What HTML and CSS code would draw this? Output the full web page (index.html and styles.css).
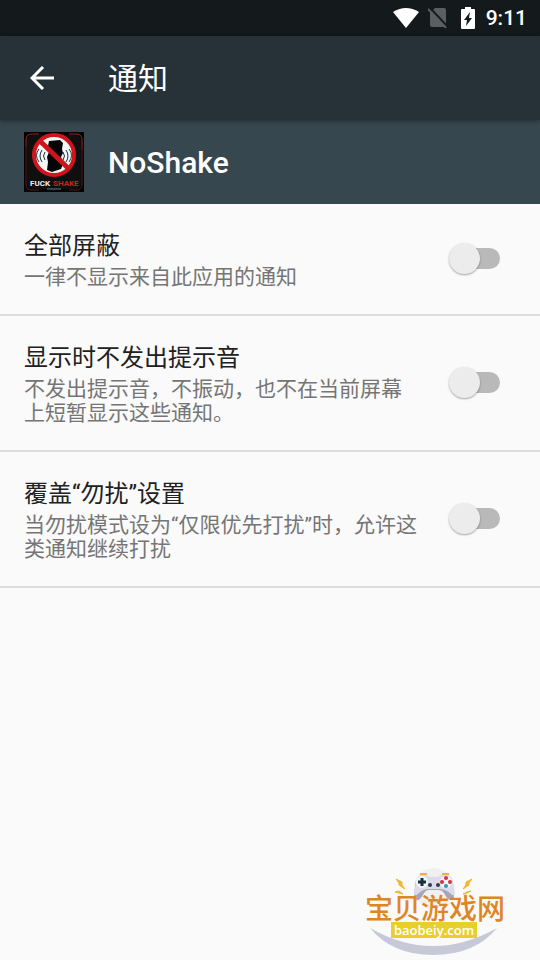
FILE: index.html
```html
<!DOCTYPE html>
<html lang="zh-CN">
<head>
<meta charset="UTF-8">
<meta name="viewport" content="width=device-width, initial-scale=1.0">
<title>通知</title>
<link rel="stylesheet" href="styles.css">
</head>
<body>

<div class="status-bar">
  <svg class="wifi-icon" viewBox="0 0 26 20" width="26" height="20">
    <path d="M0 4Q13-4 26 4L13 20Z" fill="#fff"/>
  </svg>
  <svg class="sim-icon" viewBox="0 0 20 20" width="20" height="20">
    <path d="M7 0h9q2 0 2 2v17H4q-2 0-2-2V5z" fill="#5b5f61"/>
    <path d="M2 0l18 19" stroke="#14191c" stroke-width="2"/>
    <path d="M0 1l18 19" stroke="#5b5f61" stroke-width="2"/>
  </svg>
  <svg class="battery-icon" viewBox="0 0 14 22" width="14" height="22">
    <path d="M4 0h6v2h3q1 0 1 1v18q0 1-1 1H1q-1 0-1-1V3q0-1 1-1h3z" fill="#fff"/>
    <path d="M9 5L3 13h3l-1 6 6-8H8z" fill="#14191c"/>
  </svg>
  <span class="clock">9:11</span>
</div>

<header class="toolbar">
  <button class="back" type="button" aria-label="返回">
    <svg viewBox="0 0 24 24" width="24" height="24">
      <path d="M13 1L2 12l11 11M2 12h22" fill="none" stroke="#fff" stroke-width="3"/>
    </svg>
  </button>
  <h1>通知</h1>
</header>

<section class="app-header">
  <svg class="app-icon" viewBox="0 0 60 60" width="60" height="60">
    <rect width="60" height="60" fill="#030303"/>
    <rect x="3" y="3" width="54" height="54" rx="6" fill="#0f0f0f"/>
    <path d="M2 15V8q0-6 6-6h7M45 2h7q6 0 6 6v10" fill="none" stroke="#a02422"/>
    <path d="M2 15v37q0 6 6 6h7M45 58h7q6 0 6-6V18" fill="none" stroke="#58191a"/>
    <circle cx="30" cy="23" r="19" fill="#f4f7f7"/>
    <!-- phone -->
    <path d="M25 9l11-1 3 3-1 6 1 4-2 4 2 7-2 5-9 3-5-2 1-8-1-5 2-5-1-6z" fill="#050505"/>
    <!-- vibration waves -->
    <path d="M21 20q-3 4 0 8M18 18q-4 6 0 12M15 17q-5 6 0 13M39 20q3 4 0 8M42 18q4 6 0 12M45 17q5 6 0 13" fill="none" stroke="#1d3438"/>
    <circle cx="30" cy="23" r="20" fill="none" stroke="#d0141b" stroke-width="4"/>
    <path d="M16 9l29 28" stroke="#d0141b" stroke-width="5"/>
    <text class="icon-text" x="6" y="54" fill="#eee">FUCK</text>
    <text class="icon-text" x="29" y="54" fill="#c92020">SHAKE</text>
    <path d="M23 57h14" stroke="#438d91"/>
  </svg>
  <h2>NoShake</h2>
</section>

<main>
  <div class="setting">
    <label class="setting-text" for="blockAll">
      <span class="title">全部屏蔽</span>
      <span class="summary">一律不显示来自此应用的通知</span>
    </label>
    <input class="switch" type="checkbox" role="switch" id="blockAll">
  </div>
  <div class="setting">
    <label class="setting-text" for="silent">
      <span class="title">显示时不发出提示音</span>
      <span class="summary">不发出提示音，不振动，也不在当前屏幕上短暂显示这些通知。</span>
    </label>
    <input class="switch" type="checkbox" role="switch" id="silent">
  </div>
  <div class="setting">
    <label class="setting-text" for="override">
      <span class="title">覆盖“勿扰”设置</span>
      <span class="summary">当勿扰模式设为“仅限优先打扰”时，允许这类通知继续打扰</span>
    </label>
    <input class="switch" type="checkbox" role="switch" id="override">
  </div>
</main>

<!-- Site badge over the bottom corner -->
<div class="badge">
  <svg class="badge-art" viewBox="0 0 140 92" width="140" height="92">
    <circle cx="69" cy="22" r="20" fill="#f0f0f1"/>
    <path d="M5 62Q68 98 132 62Q110 89 68 89Q27 89 5 62Z" fill="#c7c9d6"/>
    <!-- controller -->
    <path d="M51 14l-2 15q0 6 4 5 3-1 6-7 2-3 5-3h10q3 0 5 3 3 6 6 7 4 1 4-5l-2-15z" fill="#a5a7b8"/>
    <path d="M55 9h7q2 2 4 2h6q2 0 4-2h7q4 1 5 7l2 12q-2 3-5-1-5-4-11-4H64q-6 0-10 4-4 4-5 1l2-12q1-6 4-7z" fill="#dcdce8"/>
    <path d="M55 8h7M77 8h7" stroke="#e9b23b" stroke-width="2"/>
    <circle cx="57" cy="16" r="6" fill="#f3f3f8"/>
    <circle cx="81" cy="16" r="6" fill="#f3f3f8"/>
    <path d="M53 16h8M57 12v8" stroke="#17313d" stroke-width="3"/>
    <circle cx="81" cy="12" r="2" fill="#d8323c"/>
    <circle cx="77" cy="16" r="2" fill="#d8323c"/>
    <circle cx="85" cy="16" r="2" fill="#d8323c"/>
    <circle cx="81" cy="20" r="2" fill="#2b9caf"/>
    <circle cx="65" cy="19" r="2" fill="#26404e"/>
    <circle cx="73" cy="19" r="2" fill="#26404e"/>
    <!-- sparks -->
    <path d="M31 13l6 3v3l3 4-6-4v-2zM107 13l-6 3v3l-3 4 6-4v-2zM30 26l4-1 4 3-4-1zM106 25l-4 1-4 2 4-1z" fill="#f1b632" stroke="#f1b632"/>
  </svg>
  <div class="badge-name">宝贝游戏网</div>
  <div class="badge-url">baobeiy.com</div>
</div>

</body>
</html>
```
FILE: styles.css
```css
/* General Styling */
* {
  box-sizing: border-box;
}

body {
  margin: 0;
  min-height: 100vh;
  position: relative;
  background-color: #fafafa;
  color: #212121;
  font-family: Roboto, "Noto Sans CJK SC", sans-serif;
}

h1, h2 {
  margin: 0;
  color: #fff;
}

/* Status bar */
.status-bar {
  display: flex;
  align-items: center;
  justify-content: flex-end;
  height: 36px;
  padding-right: 13px;
  background-color: #14191c;
}

.sim-icon {
  margin-left: 9px;
}

.battery-icon {
  margin-left: 13px;
}

.clock {
  margin-left: 11px;
  color: #fff;
  font-size: 21px;
  font-weight: 500;
}

/* Toolbar */
.toolbar {
  display: flex;
  align-items: center;
  gap: 54px;
  position: relative;
  height: 84px;
  padding-left: 30px;
  background-color: #263238;
  box-shadow: 0 1px 5px rgba(0, 0, 0, 0.4);
}

.toolbar h1 {
  padding-bottom: 4px;
  font-size: 30px;
  font-weight: 400;
}

.back {
  display: flex;
  padding: 0;
  border: 0;
  background: none;
  cursor: pointer;
}

/* App name row */
.app-header {
  display: flex;
  align-items: center;
  gap: 24px;
  height: 84px;
  padding-left: 24px;
  background-color: #37474f;
}

.app-header h2 {
  font-size: 30px;
  font-weight: 500;
}

.icon-text {
  font-size: 8px;
  font-weight: 700;
}

/* Settings */
.setting {
  display: flex;
  align-items: center;
  gap: 28px;
  padding: 26px 40px 25px 24px;
  border-bottom: 2px solid #dcdcdc;
}

.setting-text {
  display: flex;
  flex: 1;
  flex-direction: column;
  gap: 3px;
}

.title {
  font-size: 24px;
  line-height: 32px;
}

.summary {
  color: #757575;
  font-size: 21px;
  line-height: 24px;
}

.switch {
  appearance: none;
  display: flex;
  align-items: center;
  position: relative;
  width: 52px;
  height: 32px;
  margin: 0 0 2px;
  cursor: pointer;
}

/* Track */
.switch::before {
  content: "";
  flex: 1;
  height: 21px;
  margin-left: 6px;
  border-radius: 11px;
  background-color: #b9b9b9;
}

/* Thumb */
.switch::after {
  content: "";
  position: absolute;
  left: 1px;
  top: 0;
  width: 31px;
  height: 31px;
  border-radius: 50%;
  background-color: #ececec;
  box-shadow: 0 1px 2px rgba(0, 0, 0, 0.35);
}

.switch:checked::after {
  left: 21px;
}

/* Badge */
.badge {
  display: flex;
  flex-direction: column;
  align-items: center;
  position: absolute;
  right: 35px;
  bottom: 2px;
  width: 140px;
  height: 92px;
  padding-top: 32px;
}

.badge-art {
  position: absolute;
  left: 0;
  top: 0;
}

.badge-name {
  position: relative;
  color: #df8624;
  font-size: 28px;
  font-weight: 500;
  line-height: 24px;
  white-space: nowrap;
}

.badge-url {
  position: relative;
  margin-right: 2px;
  padding: 0 3px;
  background-color: #e9ce2c;
  color: #fff;
  font-family: "Open Sans", "Noto Sans", sans-serif;
  font-size: 13px;
  font-weight: 600;
  line-height: 16px;
}
```
